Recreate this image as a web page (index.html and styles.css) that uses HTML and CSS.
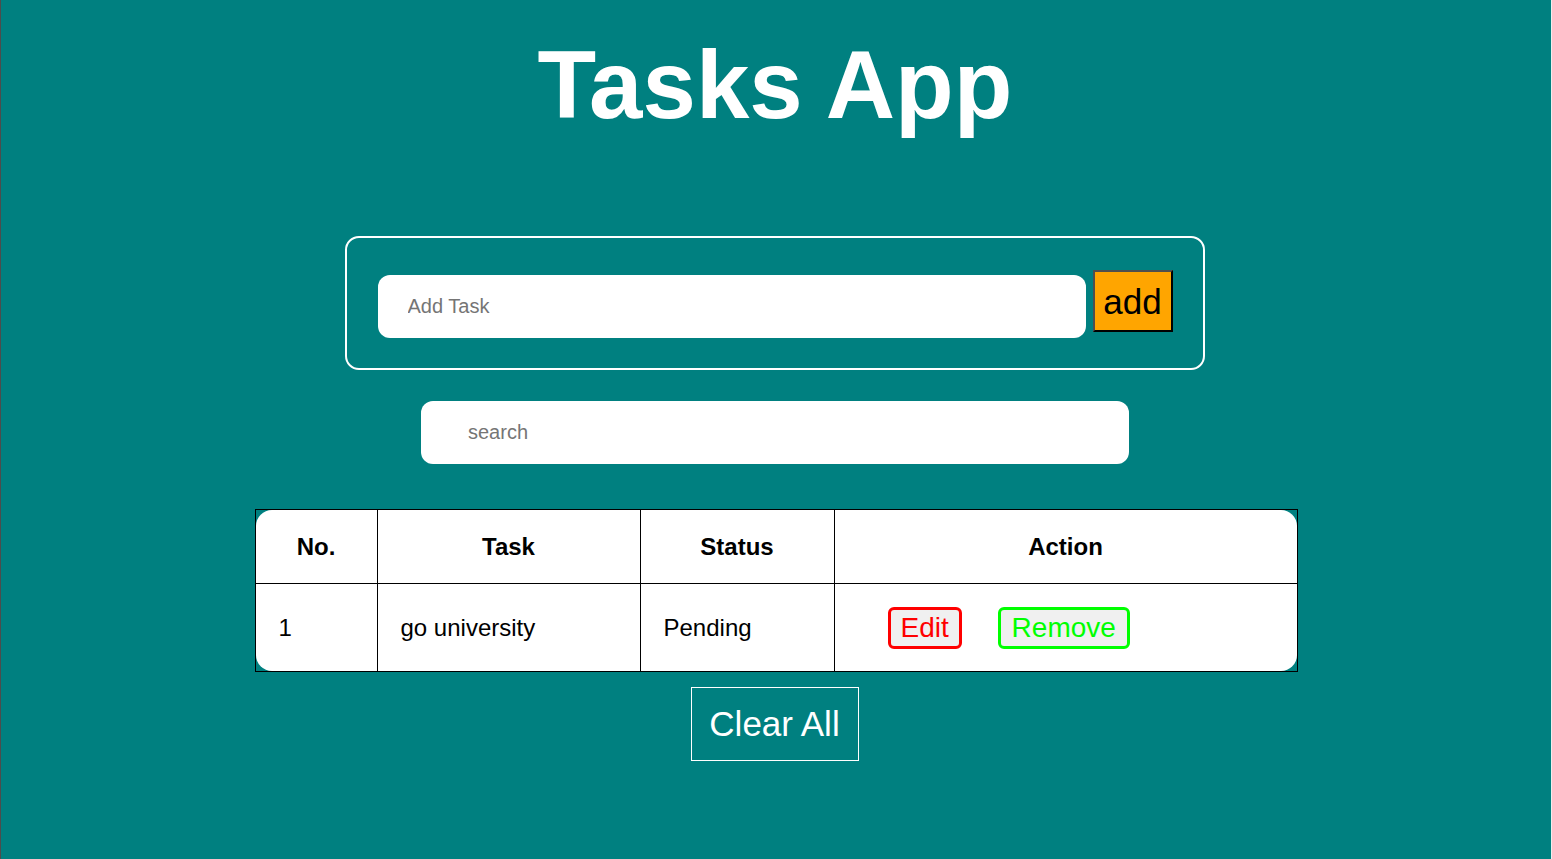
FILE: index.html
```html
<!DOCTYPE html>
<html lang="en">
<head>
<meta charset="utf-8">
<title>Tasks App</title>
<link rel="stylesheet" href="styles.css">
</head>
<body>
<main class="app">
  <h1 class="title">Tasks App</h1>
  <div class="add-box">
    <input class="task-input" type="text" placeholder="Add Task">
    <button class="add-btn">add</button>
  </div>
  <input class="search-input" type="text" placeholder="search">
  <div class="table-frame">
    <table class="tasks">
      <colgroup>
        <col class="c1"><col class="c2"><col class="c3"><col class="c4">
      </colgroup>
      <thead>
        <tr><th>No.</th><th>Task</th><th>Status</th><th class="last">Action</th></tr>
      </thead>
      <tbody>
        <tr>
          <td>1</td>
          <td>go university</td>
          <td>Pending</td>
          <td class="last actions"><button class="btn-edit">Edit</button><button class="btn-remove">Remove</button></td>
        </tr>
      </tbody>
    </table>
  </div>
  <button class="clear-btn">Clear All</button>
</main>
</body>
</html>
```
FILE: styles.css
```css
* { box-sizing: border-box; }
html, body { margin: 0; padding: 0; }
body {
  background: #008080;
  font-family: "Liberation Sans", Arial, sans-serif;
  min-height: 859px;
  border-left: 1px solid #4d4d4d;
  border-right: 1px solid #f2ecec;
}
.app {
  display: flex;
  flex-direction: column;
  align-items: center;
  padding-right: 2px;
}
.title {
  margin: 30px 0 0;
  font-size: 96px;
  line-height: 110px;
  font-weight: bold;
  color: #fff;
}
.add-box {
  margin-top: 96px;
  width: 860px;
  height: 134px;
  border: 2px solid #fff;
  border-radius: 14px;
  display: flex;
  justify-content: center;
  align-items: flex-start;
  padding-top: 32px;
}
.task-input {
  width: 708px;
  height: 63px;
  margin-top: 5px;
  margin-right: 7px;
  border: none;
  border-radius: 12px;
  padding: 0 0 0 30px;
  font-family: inherit;
  font-size: 20px;
  outline: none;
}
.task-input::placeholder, .search-input::placeholder { color: #757575; }
.add-btn {
  width: 80px;
  height: 62px;
  background: #ffa500;
  border: 2px solid;
  border-color: #4f4f4f #000 #000 #4f4f4f;
  font-family: inherit;
  font-size: 35px;
  color: #000;
  padding: 0;
  line-height: 1;
}
.search-input {
  margin-top: 31px;
  width: 708px;
  height: 63px;
  border: none;
  border-radius: 12px;
  padding: 0 0 0 47px;
  font-family: inherit;
  font-size: 20px;
  outline: none;
}
.table-frame {
  margin-top: 45px;
  margin-left: 2px;
  border: 1px solid #000;
}
.tasks {
  width: 1041px;
  table-layout: fixed;
  border-collapse: separate;
  border-spacing: 0;
  background: #fff;
  border-radius: 16px;
  font-size: 24px;
  color: #000;
}
.c1 { width: 122px; }
.c2 { width: 263px; }
.c3 { width: 194px; }
.c4 { width: 462px; }
.tasks th, .tasks td {
  border-right: 1px solid #000;
  padding: 0 0 0 23px;
}
.tasks th {
  height: 74px;
  border-bottom: 1px solid #000;
  text-align: center;
  padding: 0;
  font-weight: bold;
}
.tasks td {
  height: 87px;
  text-align: left;
  vertical-align: middle;
}
.tasks .last { border-right: none; }
.tasks td.actions { padding-left: 21px; }
.actions button {
  height: 42px;
  border-width: 3px;
  border-style: solid;
  border-radius: 6px;
  background: #f0f0f0;
  font-family: inherit;
  font-size: 28px;
  padding: 0 10px;
  line-height: 1;
  vertical-align: middle;
}
.btn-edit { color: #ff0000; border-color: #ff0000; margin-left: 32px; }
.btn-remove { color: #00ff00; border-color: #00ff00; margin-left: 36px; width: 132px; }
.clear-btn {
  margin-top: 15px;
  background: transparent;
  border: 1px solid #fff;
  color: #fff;
  font-family: inherit;
  font-size: 35px;
  padding: 15px 18px 15px 17px;
  line-height: 42px;
}
```
